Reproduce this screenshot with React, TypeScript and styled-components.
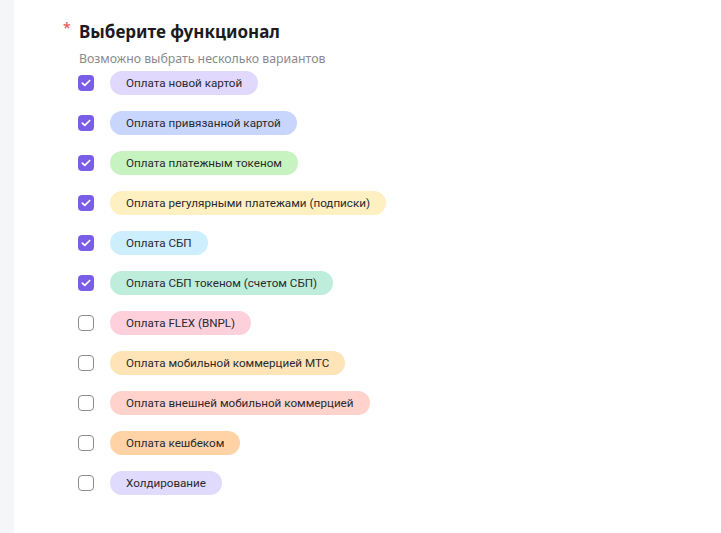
import styled, { createGlobalStyle } from "styled-components";
import { useState } from "react";

const GlobalStyle = createGlobalStyle`
  html, body {
    margin: 0;
    padding: 0;
    background: #f5f6f8;
  }
  body {
    font-family: "Noto Sans", "Open Sans", sans-serif;
    color: #1f1f1f;
  }
`;

const options = [
  { label: "Оплата новой картой", color: "#e0d8fd", checked: true },
  { label: "Оплата привязанной картой", color: "#c8d6fd", checked: true },
  { label: "Оплата платежным токеном", color: "#c6f3bf", checked: true },
  { label: "Оплата регулярными платежами (подписки)", color: "#fff0c2", checked: true },
  { label: "Оплата СБП", color: "#cdeefc", checked: true },
  { label: "Оплата СБП токеном (счетом СБП)", color: "#bfeddb", checked: true },
  { label: "Оплата FLEX (BNPL)", color: "#fdd0dc", checked: false },
  { label: "Оплата мобильной коммерцией МТС", color: "#ffe4b8", checked: false },
  { label: "Оплата внешней мобильной коммерцией", color: "#ffd2cc", checked: false },
  { label: "Оплата кешбеком", color: "#ffd3a6", checked: false },
  { label: "Холдирование", color: "#e0dafc", checked: false },
];

export default function App() {
  const [checked, setChecked] = useState(options.map((o) => o.checked));
  const toggle = (i: number) =>
    setChecked((prev) => prev.map((v, j) => (j === i ? !v : v)));

  return (
    <>
      <GlobalStyle />
      <Page>
        <Card>
          <Header>
            <Required>*</Required>
            <Title>Выберите функционал</Title>
          </Header>
          <Hint>Возможно выбрать несколько вариантов</Hint>
          <List>
            {options.map((o, i) => (
              <Row key={o.label} onClick={() => toggle(i)}>
                <Box checked={checked[i]}>
                  {checked[i] && (
                    <svg width="10" height="8" viewBox="0 0 10 8">
                      <path
                        d="M1.3 4.1 L3.8 6.4 L8.7 1.5"
                        fill="none"
                        stroke="#fff"
                        strokeWidth="1.6"
                        strokeLinecap="round"
                        strokeLinejoin="round"
                      />
                    </svg>
                  )}
                </Box>
                <Pill color={o.color}>{o.label}</Pill>
              </Row>
            ))}
          </List>
        </Card>
      </Page>
    </>
  );
}

const Page = styled.div`
  display: flex;
  min-height: 533px;
  padding-left: 14px;
`;

const Card = styled.div`
  flex: 1;
  background: #ffffff;
  padding: 20px 0 0 49px;
`;

const Header = styled.div`
  display: flex;
  align-items: flex-start;
`;

const Required = styled.span`
  color: #e5484d;
  font-size: 14px;
  line-height: 14px;
  width: 16px;
  margin-top: 1px;
`;

const Title = styled.h2`
  margin: 0;
  font-size: 17px;
  font-weight: 700;
  line-height: 24px;
  color: #1b1b1f;
`;

const Hint = styled.div`
  margin: 7px 0 0 16px;
  font-size: 12.3px;
  line-height: 16px;
  color: #8a8a8e;
`;

const List = styled.div`
  display: flex;
  flex-direction: column;
  gap: 16px;
  margin: 4px 0 0 15px;
`;

const Row = styled.label`
  display: flex;
  align-items: center;
  gap: 16px;
  cursor: pointer;
`;

const Box = styled.span<{ checked: boolean }>`
  box-sizing: border-box;
  width: 16px;
  height: 16px;
  border-radius: 4px;
  display: flex;
  align-items: center;
  justify-content: center;
  background: ${(p) => (p.checked ? "#7b5ee8" : "#fff")};
  border: ${(p) => (p.checked ? "none" : "1.3px solid #8c8c90")};
`;

const Pill = styled.span<{ color: string }>`
  display: inline-flex;
  align-items: center;
  height: 24px;
  padding: 0 16px;
  border-radius: 12px;
  background: ${(p) => p.color};
  font-family: Roboto, "Noto Sans", sans-serif;
  font-size: 11.65px;
  color: #2a2a2e;
  white-space: nowrap;
`;
